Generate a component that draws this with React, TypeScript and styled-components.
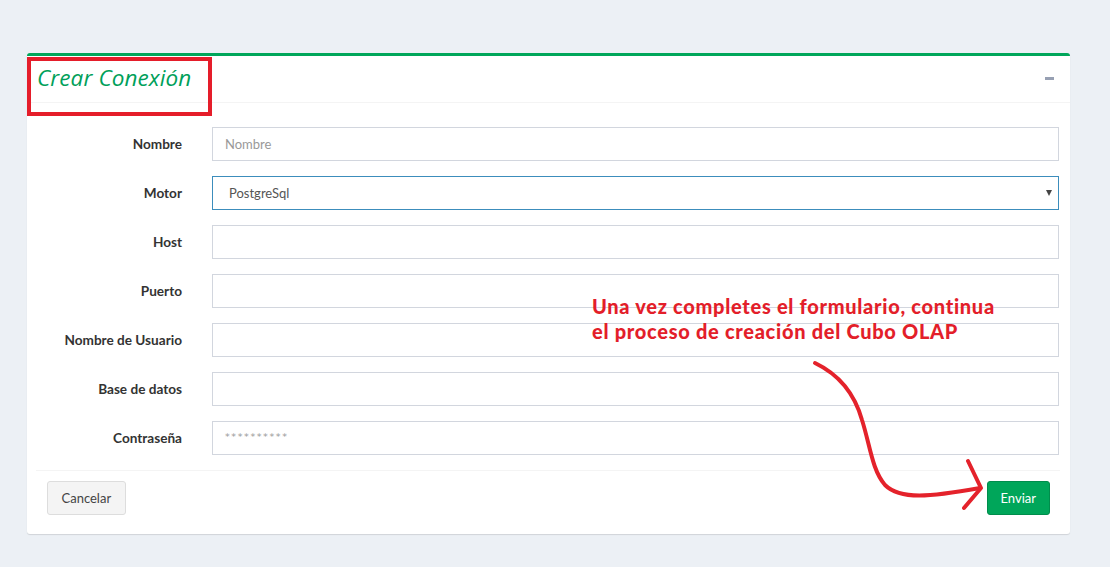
import React from "react";
import styled, { createGlobalStyle } from "styled-components";

const Global = createGlobalStyle`
  html, body { margin: 0; padding: 0; background: #ecf0f5; }
  body { font-family: "Lato", "Liberation Sans", sans-serif; color: #333; }
  * { box-sizing: border-box; }
`;

const Page = styled.div`
  position: relative;
  width: 1110px;
  height: 567px;
  padding: 53px 40px 0 27px;
  background: #ecf0f5;
  overflow: hidden;
`;

const Box = styled.section`
  position: relative;
  background: #fff;
  border-top: 3px solid #00a65a;
  border-radius: 3px;
  box-shadow: 0 1px 1px rgba(0, 0, 0, 0.12);
  height: 481px;
  display: flex;
  flex-direction: column;
`;

const BoxHeader = styled.header`
  position: relative;
  height: 47px;
  border-bottom: 1px solid #f4f4f4;
  display: flex;
  align-items: center;
  justify-content: space-between;
  padding: 0 16px 0 10px;
`;

const Title = styled.h3`
  margin: 0;
  margin-top: -4px;
  font-family: "Open Sans", "Liberation Sans", sans-serif;
  font-style: italic;
  font-weight: 400;
  font-size: 22.5px;
  letter-spacing: 0.1px;
  color: #00a05a;
`;

const Highlight = styled.div`
  position: absolute;
  left: 0;
  top: 1px;
  width: 185px;
  height: 59px;
  border: 4px solid #e51d2a;
  pointer-events: none;
`;

const Collapse = styled.span`
  display: block;
  width: 9px;
  height: 3px;
  background: #97a0b3;
  margin-top: -2px;
`;

const BoxBody = styled.form`
  padding: 24px 11px 0 10px;
  display: flex;
  flex-direction: column;
  gap: 15px;
`;

const Row = styled.div`
  display: grid;
  grid-template-columns: 175px 1fr;
  align-items: center;
`;

const Label = styled.label`
  text-align: right;
  padding-right: 30px;
  font-weight: 700;
  font-size: 13.6px;
  color: #333;
  margin-top: -1px;
`;

const Field = styled.div<{ focused?: boolean }>`
  position: relative;
  height: 34px;
  border: 1px solid ${(p) => (p.focused ? "#3c8dbc" : "#d2d6de")};
  display: flex;
  align-items: center;
  padding: 0 ${(p) => (p.focused ? "16px" : "12px")};
  font-size: 13px;
  color: #555;
`;

const Placeholder = styled.span`
  color: #999;
`;

const Masked = styled.span`
  color: #999;
  letter-spacing: 1.6px;
  font-family: "DejaVu Sans", sans-serif;
  font-size: 9.5px;
  margin-top: -4px;
`;

const Caret = styled.span`
  position: absolute;
  right: 6px;
  top: 13px;
  width: 0;
  height: 0;
  border-left: 3.5px solid transparent;
  border-right: 3.5px solid transparent;
  border-top: 6px solid #444;
`;

const Footer = styled.footer`
  margin: 15px 10px 0 9px;
  border-top: 1px solid #f4f4f4;
  padding: 10px 10px 0 11px;
  display: flex;
  justify-content: space-between;
  align-items: center;
`;

const Button = styled.button<{ primary?: boolean }>`
  height: 34px;
  padding: 0 ${(p) => (p.primary ? "13px" : "13.5px")};
  border-radius: 3px;
  font-family: "Lato", "Liberation Sans", sans-serif;
  font-size: 13px;
  border: 1px solid ${(p) => (p.primary ? "#008d4c" : "#ddd")};
  background: ${(p) => (p.primary ? "#00a65a" : "#f4f4f4")};
  color: ${(p) => (p.primary ? "#fff" : "#444")};
  margin-top: ${(p) => (p.primary ? "-1px" : "0")};
`;

const Note = styled.div`
  position: absolute;
  left: 592px;
  top: 294px;
  font-family: "Lato", "Liberation Sans", sans-serif;
  font-weight: 900;
  font-size: 20px;
  line-height: 25px;
  letter-spacing: 0.7px;
  color: #e31e2a;
  white-space: nowrap;
`;

const Arrow = styled.svg`
  position: absolute;
  left: 0;
  top: 0;
  pointer-events: none;
`;

const fields = [
  { label: "Nombre", placeholder: "Nombre" },
  { label: "Motor", value: "PostgreSql", select: true },
  { label: "Host" },
  { label: "Puerto" },
  { label: "Nombre de Usuario" },
  { label: "Base de datos" },
  { label: "Contraseña", masked: "**********" },
];

export default function App() {
  return (
    <>
      <Global />
      <Page>
        <Box>
          <BoxHeader>
            <Title>Crear Conexión</Title>
            <Collapse />
            <Highlight />
          </BoxHeader>
          <BoxBody>
            {fields.map((f) => (
              <Row key={f.label}>
                <Label>{f.label}</Label>
                <Field focused={!!f.select}>
                  {f.placeholder && <Placeholder>{f.placeholder}</Placeholder>}
                  {f.value && <span>{f.value}</span>}
                  {f.masked && <Masked>{f.masked}</Masked>}
                  {f.select && <Caret />}
                </Field>
              </Row>
            ))}
          </BoxBody>
          <Footer>
            <Button type="button">Cancelar</Button>
            <Button type="button" primary>
              Enviar
            </Button>
          </Footer>
        </Box>
        <Note>
          Una vez completes el formulario, continua
          <br />
          el proceso de creación del Cubo OLAP
        </Note>
        <Arrow width="1110" height="567" viewBox="0 0 1110 567">
          <path
            d="M815 363 C 840 375, 855 395, 862 420 C 870 445, 872 470, 885 485 C 900 500, 930 497, 980 488"
            fill="none"
            stroke="#e4222b"
            strokeWidth="4"
            strokeLinecap="round"
          />
          <path
            d="M968 461 L 981 488 L 964 508"
            fill="none"
            stroke="#e4222b"
            strokeWidth="4"
            strokeLinecap="round"
            strokeLinejoin="round"
          />
        </Arrow>
      </Page>
    </>
  );
}
